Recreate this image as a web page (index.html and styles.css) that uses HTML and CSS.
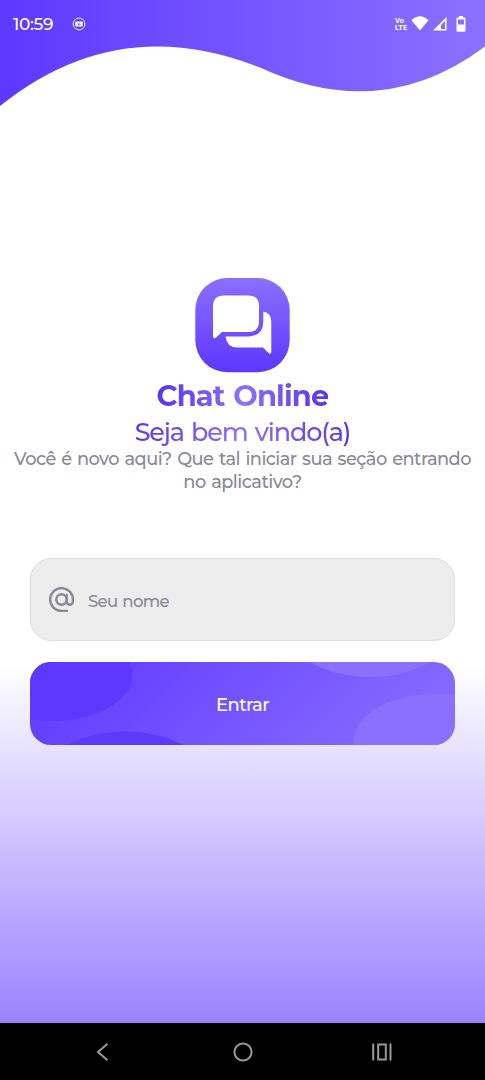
FILE: index.html
```html
<!DOCTYPE html>
<html lang="pt-BR">
<head>
<meta charset="utf-8">
<title>Chat Online</title>
<link rel="stylesheet" href="styles.css">
</head>
<body>
<div class="screen">
  <header class="top">
    <svg class="wave" viewBox="0 0 485 110" width="485" height="110">
      <defs><linearGradient id="wg"><stop offset="0" stop-color="#5e38ff"/><stop offset="1" stop-color="#8b71ff"/></linearGradient></defs>
      <path fill="url(#wg)" d="M0 0H485V46.5Q382 124 260 67.500Q118 11 0 106Z"/>
    </svg>
    <div class="status">
      <span class="clock">10:59</span>
      <svg class="notice" viewBox="0 0 14 14" width="14" height="14"><circle cx="7" cy="7" r="5.900" fill="none" stroke="#fff" stroke-width=".9"/><rect x="3.200" y="4.500" width="7.600" height="5" rx="1" fill="#fff"/><path d="M7 5.500v2.600M5.700 7.100L7 8.500l1.300-1.400" stroke="#6845ff" stroke-width=".8" fill="none"/></svg>
      <span class="volte"><span>Vo</span><span>LTE</span></span>
      <svg class="wifi" viewBox="0 0 18 15" width="18" height="15"><path fill="#fff" d="M.3 4.200Q9-3.700 17.500 4.200L9 14.600Z"/></svg>
      <svg class="signal" viewBox="0 0 14 14" width="14" height="14"><path fill="#fff" fill-rule="evenodd" d="M13.500 0V13.500H0ZM12 4V12H8V8Z"/></svg>
      <svg class="battery" viewBox="0 0 10 16" width="10" height="16"><path fill="#fff" fill-rule="evenodd" d="M3 0H7V1.500H8.500Q9.500 1.500 9.500 2.500V14.800Q9.500 15.700 8.500 15.700H1.500Q.5 15.700 .5 14.800V2.500Q.5 1.500 1.500 1.500H3ZM2 3.600V8.400H8V3.600Z"/></svg>
    </div>
  </header>
  <main class="content">
    <svg class="logo" viewBox="0 0 95 95" width="95" height="95">
      <defs><linearGradient id="lg" x2="0" y2="1"><stop offset="0" stop-color="#8b70ff"/><stop offset="1" stop-color="#5d36ff"/></linearGradient></defs>
      <rect x=".3" width="94.400" height="94.300" rx="32" fill="url(#lg)"/>
      <path fill="#fff" d="M29 17.500H53.500Q64 17.500 64 28V43.500Q64 54 53.500 54H27L20.500 60Q18 61 18 58.500V28.500Q18 17.500 29 17.500Z"/>
      <path fill="#fff" d="M68.300 33.500Q76.300 35 76.300 44V74.500Q75.500 76.500 73.500 75L68 69.500H42Q32 69.500 30.500 58.500H54Q68.300 57.500 68.300 43.500Z"/>
    </svg>
    <h1 class="title">Chat Online</h1>
    <h2 class="subtitle">Seja bem vindo(a)</h2>
    <p class="intro"><span class="line first">Você é novo aqui? Que tal iniciar sua seção entrando</span> <span class="line second">no aplicativo?</span></p>
    <form class="login">
      <label class="field">
        <svg class="at" viewBox="0 0 26 26" width="26" height="26" fill="none" stroke="#898895" stroke-width="2.400" stroke-linecap="round"><circle cx="12.500" cy="12.500" r="5.200"/><path d="M17.700 8V13.800Q17.700 17.700 20.800 17.700Q23.900 17.700 23.900 13.500V12.500A11.400 11.400 0 1 0 12.500 23.900H17.900"/></svg>
        <span class="placeholder">Seu nome</span>
      </label>
      <button class="enter" type="button">
        <svg class="blobs" viewBox="0 0 425 83" width="425" height="83"><g fill="#5e38ff"><ellipse cx="21" cy="13" rx="81.500" ry="46"/><ellipse cx="95" cy="115" rx="81" ry="45.500"/></g><g fill="#8b70ff"><ellipse cx="340" cy="-31" rx="81" ry="46"/><ellipse cx="405" cy="78" rx="81" ry="46"/></g></svg>
        <span class="enter-text">Entrar</span>
      </button>
    </form>
  </main>
  <nav class="nav">
    <svg viewBox="0 0 20 20" width="20" height="20"><path d="M14.500 1.800L5 10L14.500 18.200"/></svg>
    <svg viewBox="0 0 20 20" width="20" height="20"><circle cx="10" cy="10" r="8.600"/></svg>
    <svg viewBox="0 0 20 20" width="20" height="20"><path d="M1.200 1.500V18.500M18.500 1.500V18.500M6.200 2.500H13.800V17.500H6.200Z"/></svg>
  </nav>
</div>
</body>
</html>
```
FILE: styles.css
```css
* { box-sizing: border-box; }
body { margin: 0; font-family: Montserrat, Inter, "Noto Sans", sans-serif; }
.screen {
  width: 485px;
  height: 1080px;
  display: flex;
  flex-direction: column;
  overflow: hidden;
  background: linear-gradient(#fff 665px, #9a82ff 1023px);
}
.top { display: grid; height: 278px; align-items: start; }
.wave, .status { grid-area: 1 / 1; }
.wave { display: block; }
.status { display: flex; align-items: center; height: 47px; padding: 0 19px 0 13px; color: #fff; }
.clock { width: 59px; padding-top: 1px; font-size: 17px; font-weight: 500; letter-spacing: -.3px; white-space: nowrap; }
.volte { display: flex; flex-direction: column; width: 15px; margin: 0 1px 0 auto; font: bold 7.500px/7px Roboto, sans-serif; letter-spacing: .1px; }
.signal { margin-left: 4px; }
.battery { margin-left: 9px; }
.content { display: flex; flex-direction: column; align-items: center; flex: 1; }
.logo { display: block; }
.title, .subtitle {
  margin: 0;
  color: transparent;
  background: linear-gradient(90deg, #5a34ed, #8b70ff 50%, #5a34ed);
  background-clip: text;
  -webkit-background-clip: text;
  white-space: nowrap;
}
.title { margin-top: 4px; font-size: 29px; line-height: 38px; font-weight: 700; letter-spacing: -.9px; word-spacing: 1.500px; }
.subtitle { padding-top: 1px; font-size: 25.500px; line-height: 31px; font-weight: 500; letter-spacing: -1.150px; word-spacing: 1.500px; }
.intro { display: flex; flex-direction: column; align-items: center; margin: 0; font-size: 17.800px; line-height: 23px; font-weight: 500; letter-spacing: -.530px; word-spacing: 1.200px; color: #898895; white-space: nowrap; }
.login { display: flex; flex-direction: column; gap: 21px; width: 425px; margin-top: 65px; }
.field { display: flex; align-items: center; height: 83px; padding: 0 18px; border: 1px solid #dedee0; border-radius: 21px; background: #ededed; }
.placeholder { margin: 3px 0 0 13px; font-size: 16.500px; font-weight: 500; letter-spacing: -.650px; word-spacing: 1px; color: #898895; }
.enter {
  display: grid;
  place-items: center;
  height: 83px;
  padding: 0;
  border: 0;
  border-radius: 21px;
  overflow: hidden;
  color: #fff;
  font-family: inherit;
  background: linear-gradient(135deg, #5e38ff, #8b70ff);
}
.blobs, .enter-text { grid-area: 1 / 1; }
.enter-text { z-index: 1; padding-top: 2px; font-size: 18px; font-weight: 500; letter-spacing: -.6px; }
.nav { display: flex; justify-content: space-between; align-items: center; height: 57px; padding: 0 93px; background: #000; }
.nav svg { fill: none; stroke: #999; stroke-width: 2; }
```
